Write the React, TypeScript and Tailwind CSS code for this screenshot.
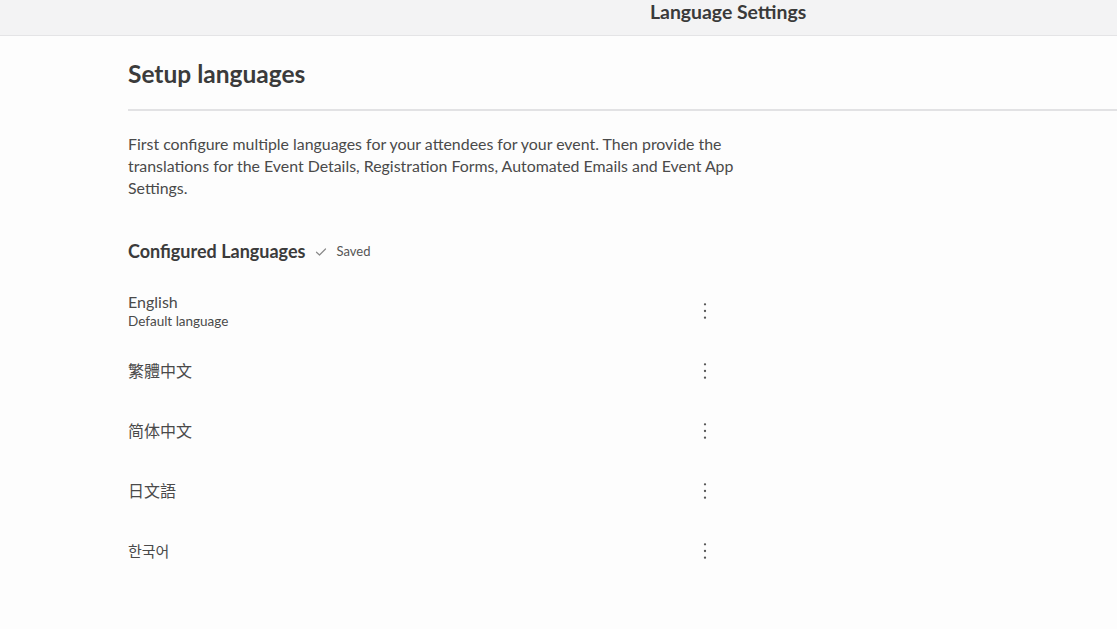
import React from 'react';

const languages = [
  { name: 'English', note: 'Default language', size: 'text-[16px]' },
  { name: '繁體中文', size: 'text-[16px]' },
  { name: '简体中文', size: 'text-[16px]' },
  { name: '日文語', size: 'text-[16px]' },
  { name: '한국어', size: 'text-[15px]' },
];

function Kebab() {
  return (
    <svg width="6" height="18" viewBox="0 0 6 18" className="text-[#555]">
      <circle cx="3" cy="2.3" r="1.15" fill="currentColor" />
      <circle cx="3" cy="9" r="1.15" fill="currentColor" />
      <circle cx="3" cy="15.7" r="1.15" fill="currentColor" />
    </svg>
  );
}

export default function App() {
  return (
    <div
      className="min-h-[629px] bg-[#fdfdfd] text-[#4a4a4a]"
      style={{ fontFamily: 'Lato, "Noto Sans CJK TC", "Noto Sans CJK KR", sans-serif' }}
    >
      <header className="h-[36px] bg-[#f3f3f4] border-b border-[#e4e4e6] pl-[650px]">
        <span className="block text-[19.4px] leading-[23px] font-bold text-[#3a3a3a]">Language Settings</span>
      </header>

      <main className="pl-[128px]">
        <h1 className="mt-[23px] text-[24.5px] leading-[30px] font-bold text-[#3b3b3b]">Setup languages</h1>
        <div className="mt-[20px] h-[2px] bg-[#e2e2e4]" />

        <p className="mt-[22px] w-[632px] text-[15.9px] leading-[22px] text-[#4a4a4a]">
          First configure multiple languages for your attendees for your event. Then provide the translations for the
          Event Details, Registration Forms, Automated Emails and Event App Settings.
        </p>

        <div className="mt-[39px] flex items-center h-[26px]">
          <h2 className="text-[18px] leading-[26px] font-bold text-[#3b3b3b]">Configured Languages</h2>
          <svg width="12" height="10" viewBox="0 0 12 10" className="ml-[10px] mt-[2px] text-[#8a8a8a]">
            <path d="M1.5 5.2 L4.5 8 L10.5 2" fill="none" stroke="currentColor" strokeWidth="1.2" strokeLinecap="round" strokeLinejoin="round" />
          </svg>
          <span className="ml-[9px] text-[13px] text-[#555] mt-[2px]">Saved</span>
        </div>

        <ul className="mt-[17px] w-[592px]">
          {languages.map((lang) => (
            <li key={lang.name} className="h-[60px] flex items-center justify-between">
              <div>
                <div className={`${lang.size} leading-[20px] text-[#4a4a4a]`}>{lang.name}</div>
                {lang.note && <div className="text-[13.5px] leading-[19px] text-[#4a4a4a]">{lang.note}</div>}
              </div>
              <button className="w-[30px] h-[30px] flex items-center justify-center">
                <Kebab />
              </button>
            </li>
          ))}
        </ul>
      </main>
    </div>
  );
}
